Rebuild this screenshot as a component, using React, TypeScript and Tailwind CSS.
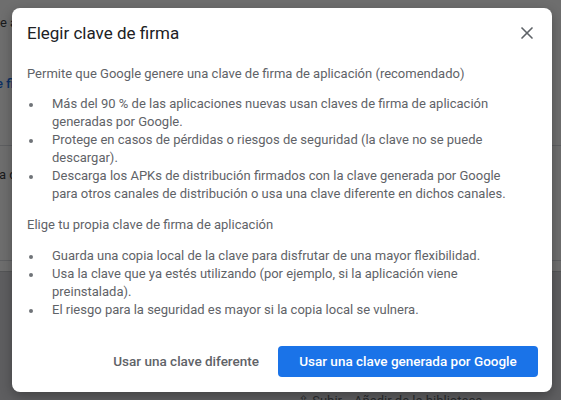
import { X } from 'lucide-react'

const groupOne = [
  'Más del 90 % de las aplicaciones nuevas usan claves de firma de aplicación generadas por Google.',
  'Protege en casos de pérdidas o riesgos de seguridad (la clave no se puede descargar).',
  'Descarga los APKs de distribución firmados con la clave generada por Google para otros canales de distribución o usa una clave diferente en dichos canales.',
]

const groupTwo = [
  'Guarda una copia local de la clave para disfrutar de una mayor flexibilidad.',
  'Usa la clave que ya estés utilizando (por ejemplo, si la aplicación viene preinstalada).',
  'El riesgo para la seguridad es mayor si la copia local se vulnera.',
]

function BulletList({ items }: { items: string[] }) {
  return (
    <ul className="flex flex-col">
      {items.map((item) => (
        <li key={item} className="flex items-start">
          <span className="w-[25px] flex-shrink-0 pt-[8px] pl-[2px]">
            <span className="block w-[4px] h-[4px] rounded-full bg-[#6f7378]" />
          </span>
          <span className="max-w-[460px]">{item}</span>
        </li>
      ))}
    </ul>
  )
}

export default function App() {
  return (
    <div className="relative w-[561px] h-[400px] overflow-hidden bg-white font-['Roboto',sans-serif]">
      {/* Page behind the dialog */}
      <div className="flex flex-col h-full text-[13px] text-[#3c4043]">
        <p className="pt-[13px]">e a</p>
        <p className="pt-[41px] -ml-[4px] text-[#1a73e8] font-medium">e fi</p>
        <div className="mt-[52px] border-b border-[#dadce0]" />
        <p className="pt-[19px] -ml-[1px]">a d</p>
        <div className="mt-[75px] border-b border-[#dadce0]" />
        <div className="mt-[10px] flex-1 bg-[#d9dbde] border-t border-[#c4c6c9] flex flex-col justify-end">
          <div className="flex items-center gap-3 pl-[298px] -mb-[10px] text-[#5f6368]">
            <span>⇧ Subir</span>
            <span>Añadir de la biblioteca</span>
          </div>
        </div>
      </div>

      {/* Overlay */}
      <div className="absolute inset-0 bg-[rgba(0,0,0,0.57)] flex items-start justify-start pt-[8px] pl-[12px]">
        <div className="w-[540px] h-[384px] bg-white rounded-[8px] shadow-[0_4px_12px_rgba(0,0,0,0.3)] flex flex-col">
          {/* Header */}
          <div className="flex items-center justify-between pl-[15px] pr-[13px] pt-[13px]">
            <h1 className="text-[17px] leading-[22px] text-[#202124]">Elegir clave de firma</h1>
            <button className="w-[24px] h-[24px] flex items-center justify-center text-[#5f6368]">
              <X size={20} strokeWidth={2} />
            </button>
          </div>

          {/* Body */}
          <div className="flex-1 px-[15px] pt-[20px] text-[13px] leading-[18px] text-[#5f6368]">
            <p>Permite que Google genere una clave de firma de aplicación (recomendado)</p>
            <div className="mt-[12px]">
              <BulletList items={groupOne} />
            </div>
            <p className="mt-[13px]">Elige tu propia clave de firma de aplicación</p>
            <div className="mt-[13px]">
              <BulletList items={groupTwo} />
            </div>
          </div>

          {/* Actions */}
          <div className="flex items-center justify-end gap-[19px] px-[14px] pb-[15px]">
            <button className="h-[31px] text-[13.5px] font-medium text-[#5f6368]">
              Usar una clave diferente
            </button>
            <button className="h-[31px] w-[260px] rounded-[4px] bg-[#1a73e8] text-[13.5px] font-medium text-white">
              Usar una clave generada por Google
            </button>
          </div>
        </div>
      </div>
    </div>
  )
}
